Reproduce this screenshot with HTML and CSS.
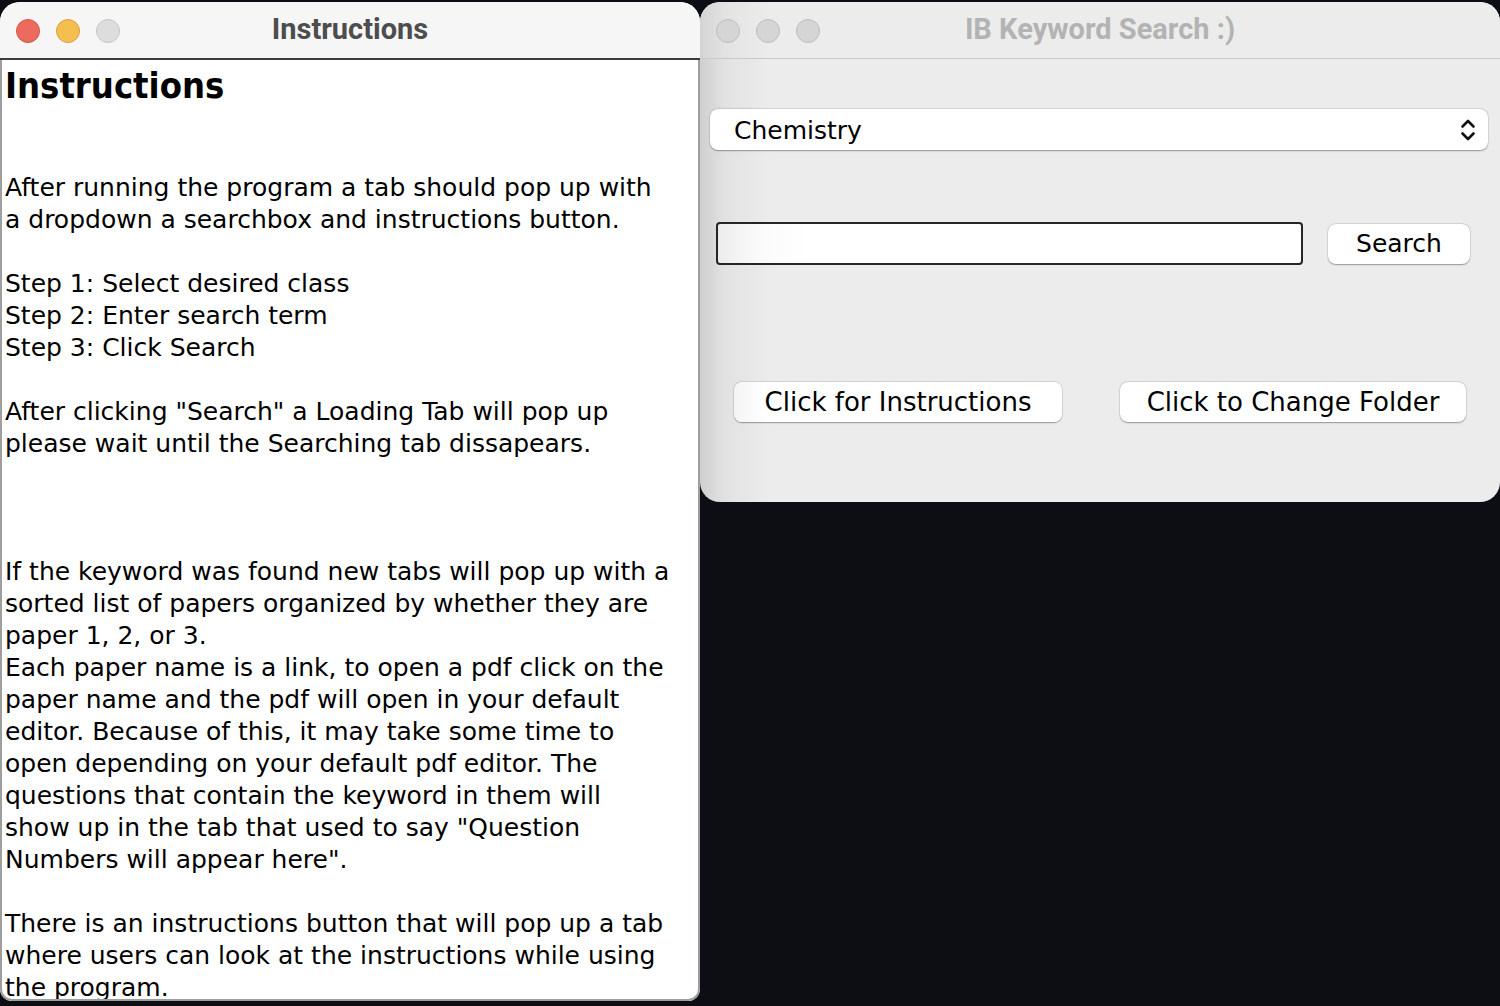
FILE: index.html
```html
<!DOCTYPE html>
<html>
<head>
<meta charset="utf-8">
<link rel="stylesheet" href="styles.css">
</head>
<body>
<div class="desktop">
  <div class="win win-left">
    <div class="titlebar titlebar-active">
      <div class="lights">
        <span class="light red"></span>
        <span class="light yellow"></span>
        <span class="light grey"></span>
      </div>
      <div class="title">Instructions</div>
    </div>
    <div class="doc">
      <h1 class="doc-head">Instructions</h1>
      <p class="para">After running the program a tab should pop up with<br>a dropdown a searchbox and instructions button.</p>
      <p class="para gap1">Step 1: Select desired class<br>Step 2: Enter search term<br>Step 3: Click Search</p>
      <p class="para gap1">After clicking "Search" a Loading Tab will pop up<br>please wait until the Searching tab dissapears.</p>
      <p class="para gap3">If the keyword was found new tabs will pop up with a<br>sorted list of papers organized by whether they are<br>paper 1, 2, or 3.<br>Each paper name is a link, to open a pdf click on the<br>paper name and the pdf will open in your default<br>editor. Because of this, it may take some time to<br>open depending on your default pdf editor. The<br>questions that contain the keyword in them will<br>show up in the tab that used to say "Question<br>Numbers will appear here".</p>
      <p class="para gap1">There is an instructions button that will pop up a tab<br>where users can look at the instructions while using<br>the program.</p>
    </div>
  </div>
  <div class="win win-right">
    <div class="titlebar titlebar-inactive">
      <div class="lights">
        <span class="light grey"></span>
        <span class="light grey"></span>
        <span class="light grey"></span>
      </div>
      <div class="title title-inactive">IB Keyword Search :)</div>
    </div>
    <div class="panel">
      <div class="select">
        <span class="select-text">Chemistry</span>
        <svg class="chev" width="16" height="24" viewBox="0 0 16 24">
          <path d="M2.5 8.5 L8 3 L13.5 8.5" fill="none" stroke="#111" stroke-width="2.6" stroke-linecap="round" stroke-linejoin="round"/>
          <path d="M2.5 15.5 L8 21 L13.5 15.5" fill="none" stroke="#111" stroke-width="2.6" stroke-linecap="round" stroke-linejoin="round"/>
        </svg>
      </div>
      <div class="search-row">
        <div class="field"></div>
        <div class="btn btn-search">Search</div>
      </div>
      <div class="btn-row">
        <div class="btn btn-big btn-instr">Click for Instructions</div>
        <div class="btn btn-big btn-folder">Click to Change Folder</div>
      </div>
    </div>
  </div>
</div>
</body>
</html>
```

FILE: styles.css
```css
html, body {
  margin: 0;
  padding: 0;
  background: #0c0e13;
  width: 1500px;
  height: 1006px;
  overflow: hidden;
}

.desktop {
  display: flex;
  align-items: flex-start;
  padding-top: 2px;
}

.win {
  box-sizing: border-box;
  overflow: hidden;
  display: flex;
  flex-direction: column;
}

.win-left {
  width: 700px;
  height: 999px;
  border-radius: 20px 20px 12px 12px;
  background: #ffffff;
}

.win-right {
  width: 800px;
  height: 500px;
  border-radius: 20px;
  background: linear-gradient(to right, #cfcfcf 0px, #e2e2e2 25px, #ececec 70px);
}

.titlebar {
  position: relative;
  height: 56px;
  flex: none;
  display: flex;
  align-items: center;
  box-sizing: border-box;
}

.titlebar-active {
  background: #f6f6f6;
  border-bottom: 2px solid #3c3c3c;
  height: 58px;
}

.titlebar-inactive {
  background: linear-gradient(to right, rgba(0,0,0,0.10) 0px, rgba(0,0,0,0.04) 25px, rgba(0,0,0,0) 70px), #ececec;
  border-bottom: 1px solid #c9c9c9;
  height: 57px;
}

.lights {
  display: flex;
  gap: 16px;
  padding-left: 16px;
  padding-top: 2px;
}

.light {
  width: 24px;
  height: 24px;
  border-radius: 50%;
  box-sizing: border-box;
}

.red { background: #ed6a5e; border: 1px solid #d2564b; }
.yellow { background: #f5bf4f; border: 1px solid #d6a243; }
.grey { background: #dddddd; border: 1px solid #c4c4c4; }
.win-right .grey { background: #d5d5d5; border: 1px solid #bdbdbd; }

.title {
  position: absolute;
  left: 0;
  right: 0;
  top: 9px;
  text-align: center;
  font-family: Roboto, "Liberation Sans", sans-serif;
  font-weight: 700;
  font-size: 29px;
  line-height: 36px;
  color: #4d4d4d;
  padding-left: 0px;
}

.title-inactive {
  color: #b3b3b3;
}

.doc {
  flex: 1;
  background: #ffffff;
  border-left: 2px solid #9e9e9e;
  border-right: 2px solid #9e9e9e;
  border-bottom: 2px solid #9e9e9e;
  border-radius: 0 0 12px 12px;
  padding: 0 0 0 3px;
  overflow: hidden;
  font-family: "DejaVu Sans", sans-serif;
  color: #000;
}

.doc-head {
  margin: 6px 0 66px 0;
  font-family: "DejaVu Sans Condensed", "DejaVu Sans", sans-serif;
  font-stretch: condensed;
  font-size: 36px;
  line-height: 40px;
  font-weight: 700;
}

.para {
  margin: 0;
  font-size: 25px;
  line-height: 32px;
  white-space: nowrap;
}

.gap1 { margin-top: 32px; }
.gap3 { margin-top: 96px; }

.panel {
  flex: 1;
  display: flex;
  flex-direction: column;
  font-family: "DejaVu Sans", sans-serif;
  color: #000;
}

.select {
  margin: 50px 0 0 10px;
  width: 778px;
  height: 41px;
  box-sizing: border-box;
  background: #ffffff;
  border-radius: 8px;
  box-shadow: 0 0.5px 1.5px rgba(0,0,0,0.35), 0 0 0 0.5px rgba(0,0,0,0.08);
  display: flex;
  align-items: center;
  justify-content: space-between;
  padding: 0 12px 0 24px;
}

.select-text {
  font-size: 25px;
  line-height: 32px;
  padding-top: 2px;
}

.chev {
  display: block;
  margin-top: 1px;
}

.search-row {
  display: flex;
  align-items: center;
  margin-top: 72px;
  padding-left: 16px;
}

.field {
  width: 587px;
  height: 43px;
  box-sizing: border-box;
  border: 2px solid #262626;
  border-radius: 4px;
  background: linear-gradient(to right, #ececec 0px, #fafafa 40px, #ffffff 90px);
}

.btn {
  height: 40px;
  box-sizing: border-box;
  background: #ffffff;
  border-radius: 8px;
  box-shadow: 0 0.5px 1.5px rgba(0,0,0,0.35), 0 0 0 0.5px rgba(0,0,0,0.08);
  display: flex;
  align-items: center;
  justify-content: center;
  font-size: 25px;
  line-height: 32px;
  white-space: nowrap;
}

.btn-big {
  font-size: 26px;
}

.btn-search {
  margin-left: 25px;
  width: 142px;
}

.btn-row {
  display: flex;
  margin-top: 117px;
  padding-left: 34px;
  gap: 58px;
}

.btn-instr {
  width: 328px;
  background: linear-gradient(to right, #f4f4f4 0px, #ffffff 30px);
}

.btn-folder {
  width: 346px;
}
```
